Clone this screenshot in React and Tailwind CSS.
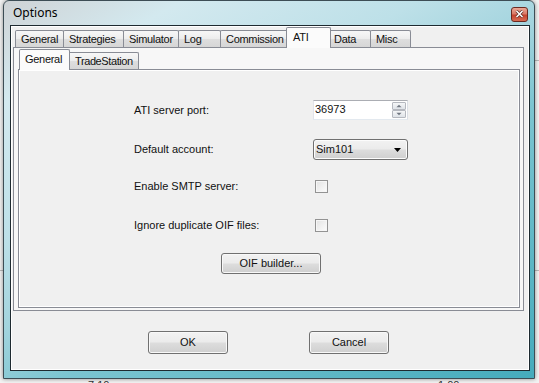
import React from "react";

const btnFace =
  "bg-[linear-gradient(to_bottom,#f2f2f2_0%,#ebebeb_48%,#dddddd_52%,#cfcfcf_100%)]";

function OuterTab({ label, w, selected, first }) {
  if (selected) {
    return (
      <div
        className={`relative z-10 -ml-[3px] -mr-[2px] -mb-px h-[21px] ${w} border border-b-0 border-[#898c95] rounded-t-[2px] bg-[#fbfbfb] pl-[6px] pt-[2px] leading-[14px] tracking-[-0.3px]`}
      >
        {label}
      </div>
    );
  }
  return (
    <div
      className={`${first ? "" : "-ml-px"} h-[17px] ${w} border border-b-0 border-[#898c95] rounded-t-[2px] bg-[linear-gradient(to_bottom,#f7f7f7_0%,#ececec_50%,#dedede_51%,#d6d6d6_100%)] pl-[5px] pt-[1px] leading-[14px] tracking-[-0.3px] whitespace-nowrap overflow-hidden`}
    >
      {label}
    </div>
  );
}

function Checkbox() {
  return (
    <div className="ml-[2px] w-[13px] h-[13px] border border-[#939393] bg-[linear-gradient(135deg,#e2e2e2_0%,#f5f5f5_70%,#fcfcfc_100%)] shadow-[inset_0_0_0_1px_#f6f6f6]" />
  );
}

function Row({ label, children, className = "" }) {
  return (
    <div className={`flex items-center h-[20px] ${className}`}>
      <div className="w-[179px]">{label}</div>
      {children}
    </div>
  );
}

export default function App() {
  return (
    <div className="relative w-[539px] h-[383px] overflow-hidden bg-[#f3f3f3] font-['Liberation_Sans',Arial,sans-serif] text-[11px] text-[#111]">
      {/* desktop behind the dialog */}
      <div className="absolute left-[88px] top-[377px] text-[11px] text-[#333]">7.10</div>
      <div className="absolute left-[438px] top-[377px] text-[11px] text-[#333]">1.00</div>
      <div className="absolute right-0 top-[60px] w-[6px] h-px bg-[#b9b9b9]" />
      <div className="absolute right-0 top-[270px] w-[6px] h-px bg-[#b9b9b9]" />
      <div className="absolute left-0 top-[270px] w-[4px] h-px bg-[#b9b9b9]" />

      {/* window */}
      <div className="absolute left-[3px] top-0 w-[532px] h-[379px] flex flex-col border border-[#3d4d55] rounded-t-[6px] bg-[linear-gradient(150deg,#cfd3d6_0%,#d3e9ef_15%,#bde0e8_35%,#a3d4de_48%,#7cc5d1_60%,#45abbc_100%)] shadow-[0_0_4px_rgba(0,0,0,0.45)]">
        <div className="h-[24px] flex items-center justify-between pl-[9px] pr-[6px]">
          <span className="font-['Noto_Sans',sans-serif] text-[12px] text-black">Options</span>
          <div className="mt-[2px] w-[17px] h-[15px] flex items-center justify-center rounded-[3px] border border-[#6b2b22] bg-[linear-gradient(to_bottom,#eba896_0%,#d97a67_45%,#c5432e_55%,#d66c53_100%)]">
            <svg width="9" height="8" viewBox="0 0 9 8">
              <path d="M1.5 1 L7.5 7 M7.5 1 L1.5 7" stroke="#5a2a22" strokeWidth="3" />
              <path d="M1.5 1 L7.5 7 M7.5 1 L1.5 7" stroke="#ffffff" strokeWidth="1.6" />
            </svg>
          </div>
        </div>

        <div className="ml-[6px] mr-[4px] h-[346px] flex flex-col border border-[#1e2a30] bg-[#f0f0f0] shadow-[inset_0_0_0_1px_#ffffff]">
          {/* outer tab control */}
          <div className="pt-[1px] pl-[2px] pr-[5px]">
            <div className="flex items-end h-[20px] pl-[2px]">
              <OuterTab label="General" w="w-[49px]" first />
              <OuterTab label="Strategies" w="w-[61px]" />
              <OuterTab label="Simulator" w="w-[56px]" />
              <OuterTab label="Log" w="w-[43px]" />
              <OuterTab label="Commission" w="w-[69px]" />
              <OuterTab label="ATI" w="w-[45px]" selected />
              <OuterTab label="Data" w="w-[43px]" />
              <OuterTab label="Misc" w="w-[41px]" />
            </div>
            <div className="h-[264px] flex flex-col border border-[#898c95] bg-[#f7f7f7] pt-[1px] pl-[4px] pr-[3px] pb-[2px]">
              {/* inner tab control */}
              <div className="flex items-end h-[20px] pl-[3px]">
                <div className="relative z-10 -ml-[2px] -mr-[2px] -mb-px h-[21px] w-[51px] border border-b-0 border-[#898c95] rounded-t-[2px] bg-[#fbfbfb] pl-[5px] pt-[2px] leading-[14px] tracking-[-0.3px]">
                  General
                </div>
                <div className="-ml-px h-[17px] w-[72px] border border-b-0 border-[#898c95] rounded-t-[2px] bg-[linear-gradient(to_bottom,#f7f7f7_0%,#ececec_50%,#dedede_51%,#d6d6d6_100%)] pl-[7px] pt-[1px] leading-[14px] tracking-[-0.4px] whitespace-nowrap">
                  TradeStation
                </div>
              </div>
              <div className="flex-1 flex flex-col border border-[#898c95] bg-[#f0f0f0] shadow-[inset_0_0_0_1px_#ffffff] pt-[30px] pl-[115px]">
                <Row label="ATI server port:">
                  <div className="w-[95px] h-[20px] flex items-center border border-[#abadb3] border-l-[#e2e3ea] border-r-[#dbdfe6] border-b-[#e3e9ef] bg-white pl-[1px] pr-[1px]">
                    <span className="flex-1 leading-[14px] -mt-[2px]">36973</span>
                    <div className="flex flex-col h-[16px] w-[14px]">
                      {["M2 5 L5 2 L8 5 Z", "M2 2 L5 5 L8 2 Z"].map((d) => (
                        <div
                          key={d}
                          className="h-[8px] w-[14px] flex items-center justify-center border border-[#b5b8bf] rounded-[1px] bg-[linear-gradient(to_bottom,#f5f6f7,#dfe3e8)]"
                        >
                          <svg width="10" height="6" viewBox="0 0 10 7">
                            <path d={d} fill="#6f7680" />
                          </svg>
                        </div>
                      ))}
                    </div>
                  </div>
                </Row>
                <Row label="Default account:" className="mt-[19px] h-[21px]">
                  <div className={`w-[95px] h-[21px] flex items-center justify-between border border-[#707070] rounded-[3px] ${btnFace} shadow-[inset_0_0_0_1px_#fcfcfc] pl-[2px] pr-[6px]`}>
                    <span>Sim101</span>
                    <svg width="7" height="4" viewBox="0 0 7 4">
                      <path d="M0 0 L7 0 L3.5 4 Z" fill="#000" />
                    </svg>
                  </div>
                </Row>
                <Row label="Enable SMTP server:" className="mt-[16px]">
                  <Checkbox />
                </Row>
                <Row label="Ignore duplicate OIF files:" className="mt-[19px]">
                  <Checkbox />
                </Row>
                <div className="mt-[18px] ml-[87px]">
                  <button className={`w-[100px] h-[21px] border border-[#707070] rounded-[3px] ${btnFace} shadow-[inset_0_0_0_1px_#f8f8f8] text-[11px]`}>
                    OIF builder...
                  </button>
                </div>
              </div>
            </div>
          </div>

          {/* dialog buttons */}
          <div className="mt-[20px] flex pl-[137px] gap-[81px]">
            <button className={`w-[80px] h-[23px] border border-[#707070] rounded-[3px] ${btnFace} shadow-[inset_0_0_0_1px_#f8f8f8] text-[11px]`}>
              OK
            </button>
            <button className={`w-[80px] h-[23px] border border-[#707070] rounded-[3px] ${btnFace} shadow-[inset_0_0_0_1px_#f8f8f8] text-[11px]`}>
              Cancel
            </button>
          </div>
        </div>
      </div>
    </div>
  );
}
